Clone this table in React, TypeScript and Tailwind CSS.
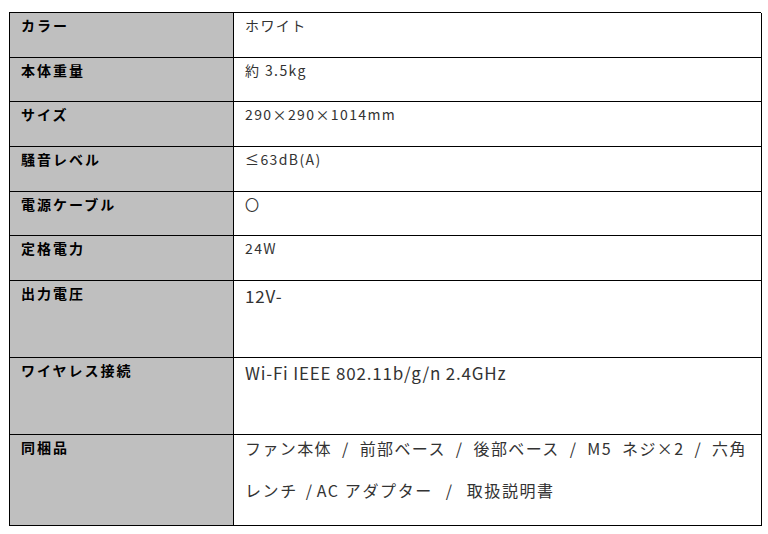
import React from "react";

const font = { fontFamily: '"Noto Sans CJK JP", "Noto Sans", sans-serif' };

type Row = { label: string; value: React.ReactNode; h: string; big?: boolean };

const rows: Row[] = [
  { label: "カラー", value: "ホワイト", h: "h-[45px]" },
  { label: "本体重量", value: "約 3.5kg", h: "h-[44px]" },
  { label: "サイズ", value: "290×290×1014mm", h: "h-[45px]" },
  { label: "騒音レベル", value: "≤63dB(A)", h: "h-[45px]" },
  { label: "電源ケーブル", value: "〇", h: "h-[44px]" },
  { label: "定格電力", value: "24W", h: "h-[45px]" },
  { label: "出力電圧", value: "12V-", h: "h-[77px]", big: true },
  { label: "ワイヤレス接続", value: "Wi-Fi IEEE 802.11b/g/n 2.4GHz", h: "h-[77px]", big: true },
];

export default function App() {
  return (
    <div className="w-[768px] h-[534px] bg-white" style={font}>
      <div className="ml-[9px] pt-[12px]">
        <div className="w-[752px] border-t border-l border-black grid grid-cols-[224px_528px]">
          {rows.map((r) => (
            <React.Fragment key={r.label}>
              <div className={`${r.h} bg-[#bfbfbf] border-r border-b border-black pl-[11px] pt-[2px] text-[14px] leading-[20px] tracking-[2px] font-bold text-black`}>
                {r.label}
              </div>
              {r.big ? (
                <div className={`${r.h} border-r border-b border-black pl-[11px] pt-[2px] text-[17px] leading-[26px] tracking-[0.8px] text-[#333]`}>
                  {r.value}
                </div>
              ) : (
                <div className={`${r.h} border-r border-b border-black pl-[11px] pt-[2px] text-[14px] leading-[20px] tracking-[1.4px] text-[#333]`}>
                  {r.value}
                </div>
              )}
            </React.Fragment>
          ))}
          <div className="h-[91px] bg-[#bfbfbf] border-r border-b border-black pl-[11px] pt-[2px] text-[14px] leading-[20px] tracking-[2px] font-bold text-black">
            同梱品
          </div>
          <div className="h-[91px] border-r border-b border-black pl-[11px] text-[16px] tracking-[1.4px] text-[#333]">
            <div className="leading-[26px] whitespace-nowrap [word-spacing:5px]">ファン本体 / 前部ベース / 後部ベース / M5 ネジ×2 / 六角</div>
            <div className="leading-[26px] mt-[16px] whitespace-nowrap tracking-[1.6px]">
              レンチ<span className="ml-[8px] mr-[3px]">/</span>AC アダプター<span className="mx-[13px]">/</span>取扱説明書
            </div>
          </div>
        </div>
      </div>
    </div>
  );
}
